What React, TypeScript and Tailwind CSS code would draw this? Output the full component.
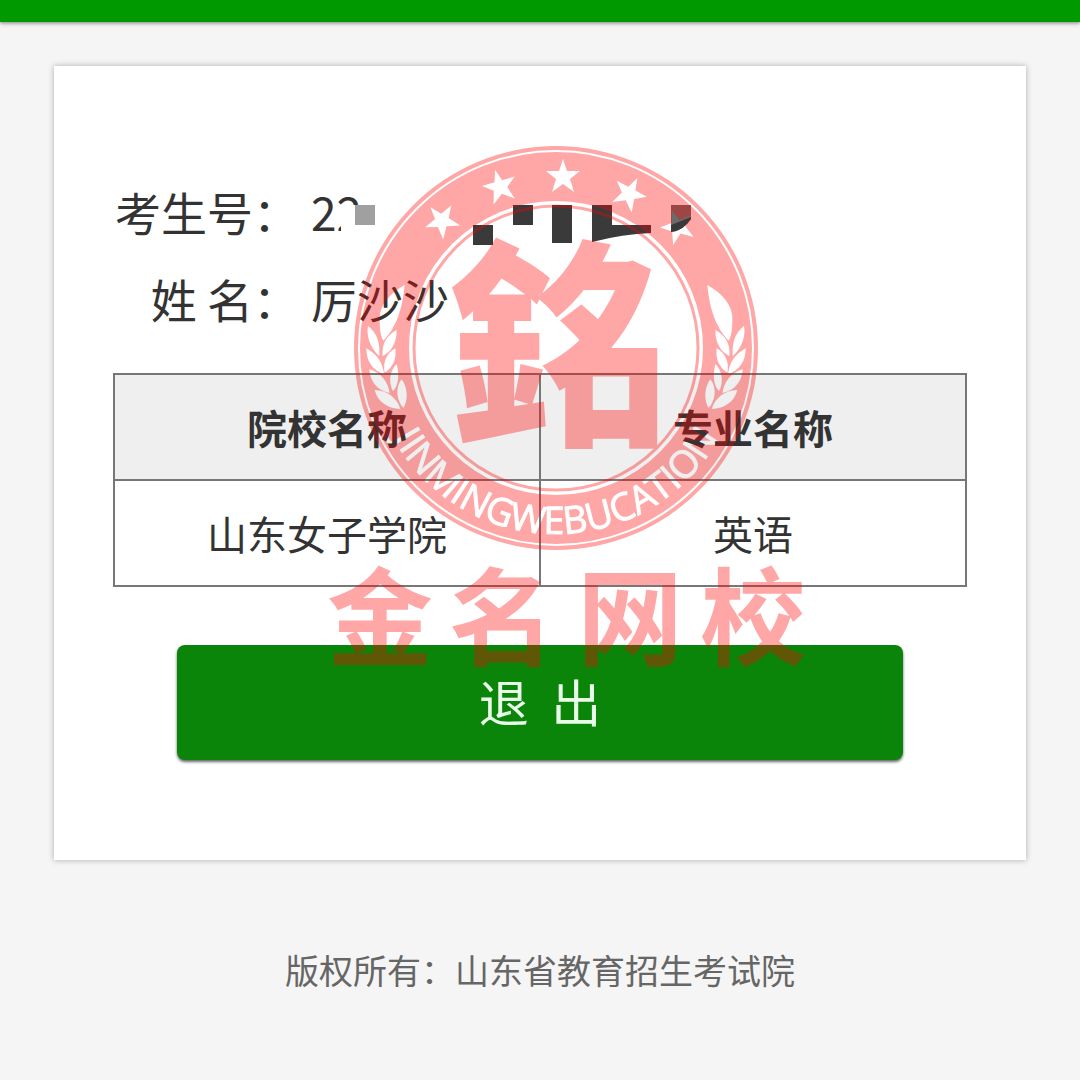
import { useState } from "react";

type Admission = {
    school: string;
    major: string;
};

const admissions: Admission[] = [{ school: "山东女子学院", major: "英语" }];

const stars = [
    { x: -114, y: -127, rotate: -40 },
    { x: -56, y: -161, rotate: -16 },
    { x: 7, y: -171, rotate: 0 },
    { x: 73, y: -154, rotate: 28 },
    { x: 122, y: -121, rotate: -21 },
];

const leaves = [
    "M152 15C112 38 78 70 77 115C77 150 80 170 88 182C120 150 144 100 152 15Z",
    "M42 138C36 165 48 205 76 228C78 195 72 160 42 138Z",
    "M128 150C100 165 82 190 86 228C112 215 128 190 128 150Z",
    "M37 205C36 240 55 272 90 283C87 250 70 223 37 205Z",
    "M124 205C98 220 86 245 92 278C116 262 128 240 124 205Z",
    "M46 268C48 305 70 332 107 339C102 305 80 278 46 268Z",
    "M128 252C108 270 102 305 117 334C134 315 136 285 128 252Z",
    "M62 330C70 364 100 386 139 387C130 355 100 331 62 330Z",
    "M143 298C124 320 126 360 148 384C164 360 160 320 143 298Z",
];

function Laurel() {
    return (
        <g transform="translate(-202 -68) scale(0.3333)">
            {leaves.map((d) => (
                <path key={d} d={d} />
            ))}
        </g>
    );
}

function Watermark() {
    return (
        <svg
            aria-hidden="true"
            viewBox="0 0 540 580"
            className="pointer-events-none absolute top-[74px] left-1/2 w-[540px] -translate-x-1/2 overflow-visible font-['Noto_Sans_CJK_SC',sans-serif]"
        >
            <defs>
                <path id="sealArc" d="M-186 0A186 186 0 0 0 186 0" />
                <mask id="sealMask" maskUnits="userSpaceOnUse" x="-210" y="-210" width="420" height="420">
                    <circle r="202" fill="white" />
                    <circle r="197" fill="none" stroke="black" strokeWidth="2" />
                    <circle r="147" fill="black" />
                    <circle r="142" fill="none" stroke="white" strokeWidth="3" />
                    {stars.map((star) => (
                        <polygon
                            key={star.x}
                            points="0,-18 4,-6 17,-6 7,2 11,15 0,7 -11,15 -7,2 -17,-6 -4,-6"
                            transform={`translate(${star.x} ${star.y}) rotate(${star.rotate})`}
                            fill="black"
                        />
                    ))}
                    <Laurel />
                    <g transform="scale(-1 1)">
                        <Laurel />
                    </g>
                    <text
                        fill="black"
                        stroke="black"
                        strokeWidth="1"
                        textAnchor="middle"
                        className="font-['Open_Sans',sans-serif] text-[38px]"
                    >
                        <textPath href="#sealArc" startOffset="50%">
                            JINMINGWEBUCATION
                        </textPath>
                    </text>
                </mask>
            </defs>
            <g fill="#ff0000" opacity="0.35">
                <g transform="translate(286 208)">
                    <rect x="-210" y="-210" width="420" height="420" mask="url(#sealMask)" />
                    <text x="2" y="80" textAnchor="middle" className="text-[220px] font-black">
                        銘
                    </text>
                </g>
                <text x="110 232 360 483" y="517" textAnchor="middle" className="text-[106px] font-bold">
                    金名网校
                </text>
            </g>
        </svg>
    );
}

function HiddenDigits() {
    return (
        <svg
            aria-hidden="true"
            viewBox="342 205 350 40"
            className="absolute top-[29px] left-[30px] h-[40px] w-[350px] max-w-none"
        >
            <rect x="342" y="205" width="350" height="40" fill="white" />
            <rect x="356" y="205" width="20" height="20" fill="#a0a0a0" />
            <g fill="#3a3a3a">
                <rect x="474" y="225" width="20" height="20" />
                <rect x="514" y="205" width="20" height="20" />
                <rect x="553" y="205" width="20" height="38" />
                <path d="M593 205h20v20h39v8q-28 1-59 9z" />
            </g>
            <path d="M672 205h20v14q-8 12-20 13z" fill="#6b6b6b" />
            <path d="M672 232v-7l20-8v2q-8 12-20 13z" fill="#3a3a3a" />
        </svg>
    );
}

export default function App() {
    const [signedOut, setSignedOut] = useState(false);

    return (
        <div className="min-h-screen bg-[#f5f5f5] font-['Noto_Sans_CJK_SC',sans-serif] text-[#333333]">
            <header className="h-[22px] bg-[#009900] shadow-[0_1px_4px_rgba(0,0,0,0.5)]" />
            <main className="relative mx-[5%] mt-[44px] bg-white px-[59px] pt-[110px] pb-[100px] shadow-[0_0_6px_rgba(0,0,0,0.3)]">
                <dl className="grid grid-cols-[186px_1fr] gap-x-3 gap-y-[17px] text-[46px] leading-[70px]">
                    <dt className="text-right">考生号：</dt>
                    <dd className="relative">
                        22
                        <HiddenDigits />
                    </dd>
                    <dt className="text-right">姓 名：</dt>
                    <dd>厉沙沙</dd>
                </dl>
                <table className="mt-[40px] w-full table-fixed border-collapse text-center text-[40px] leading-[60px]">
                    <thead className="bg-[#efefef]">
                        <tr>
                            <th className="border-2 border-[#777777] py-[22px] font-bold">院校名称</th>
                            <th className="border-2 border-[#777777] py-[22px] font-bold">专业名称</th>
                        </tr>
                    </thead>
                    <tbody>
                        {admissions.map((item) => (
                            <tr key={item.school}>
                                <td className="border-2 border-[#777777] py-[22px]">{item.school}</td>
                                <td className="border-2 border-[#777777] py-[22px]">{item.major}</td>
                            </tr>
                        ))}
                    </tbody>
                </table>
                <button
                    type="button"
                    disabled={signedOut}
                    onClick={() => setSignedOut(true)}
                    className="mx-auto mt-[58px] block h-[115px] w-[85%] rounded-lg bg-[#0a850a] pb-1 text-[50px] text-[#e9fbe9] shadow-[0_2px_3px_rgba(0,0,0,0.6)]"
                >
                    退&nbsp;&nbsp;出
                </button>
                <Watermark />
            </main>
            <footer className="py-[85px] text-center text-[34px] leading-[50px] text-[#666666]">
                版权所有：山东省教育招生考试院
            </footer>
        </div>
    );
}
